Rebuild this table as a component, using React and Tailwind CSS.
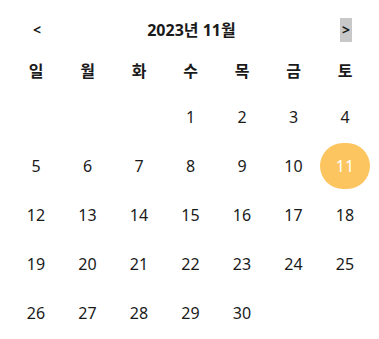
import { useState } from 'react'

const WEEKDAYS = ['일', '월', '화', '수', '목', '금', '토']

export default function App() {
  const [year] = useState(2023)
  const [month] = useState(11)
  const selected = 11

  const first = new Date(year, month - 1, 1).getDay()
  const last = new Date(year, month, 0).getDate()
  const cells = []
  for (let i = 0; i < first; i++) cells.push(null)
  for (let d = 1; d <= last; d++) cells.push(d)

  return (
    <div
      className="w-[379px] h-[339px] bg-white text-[#1a1a1a] overflow-hidden"
      style={{ fontFamily: '"Noto Sans", "Noto Sans CJK KR", sans-serif' }}
    >
      {/* Header */}
      <div className="flex items-center justify-between pt-[18px] pl-[31px] pr-[27px] h-[42px]">
        <button className="w-[12px] h-[24px] flex items-center justify-center text-[14px] font-bold leading-none">
          &lt;
        </button>
        <span className="text-[16px] font-bold leading-none">
          {year}년 {month}월
        </span>
        <button className="w-[12px] h-[24px] flex items-center justify-center bg-[#c8c8c8] text-[14px] font-bold leading-none">
          &gt;
        </button>
      </div>

      {/* Weekdays */}
      <div className="grid grid-cols-7 gap-x-[1.5px] pl-[11px] w-[370px] mt-[17px] h-[24px] mb-[11px]">
        {WEEKDAYS.map((w) => (
          <div key={w} className="flex items-center justify-center text-[16px] font-bold leading-none">
            {w}
          </div>
        ))}
      </div>

      {/* Days */}
      <div className="grid grid-cols-7 gap-x-[1.5px] gap-y-[3px] pl-[11px] w-[370px]">
        {cells.map((d, i) => (
          <div
            key={i}
            className={`h-[46px] flex items-center justify-center text-[16px] leading-none rounded-full ${
              d === selected ? 'bg-[#fdc55f] text-white' : ''
            }`}
          >
            {d}
          </div>
        ))}
      </div>
    </div>
  )
}
